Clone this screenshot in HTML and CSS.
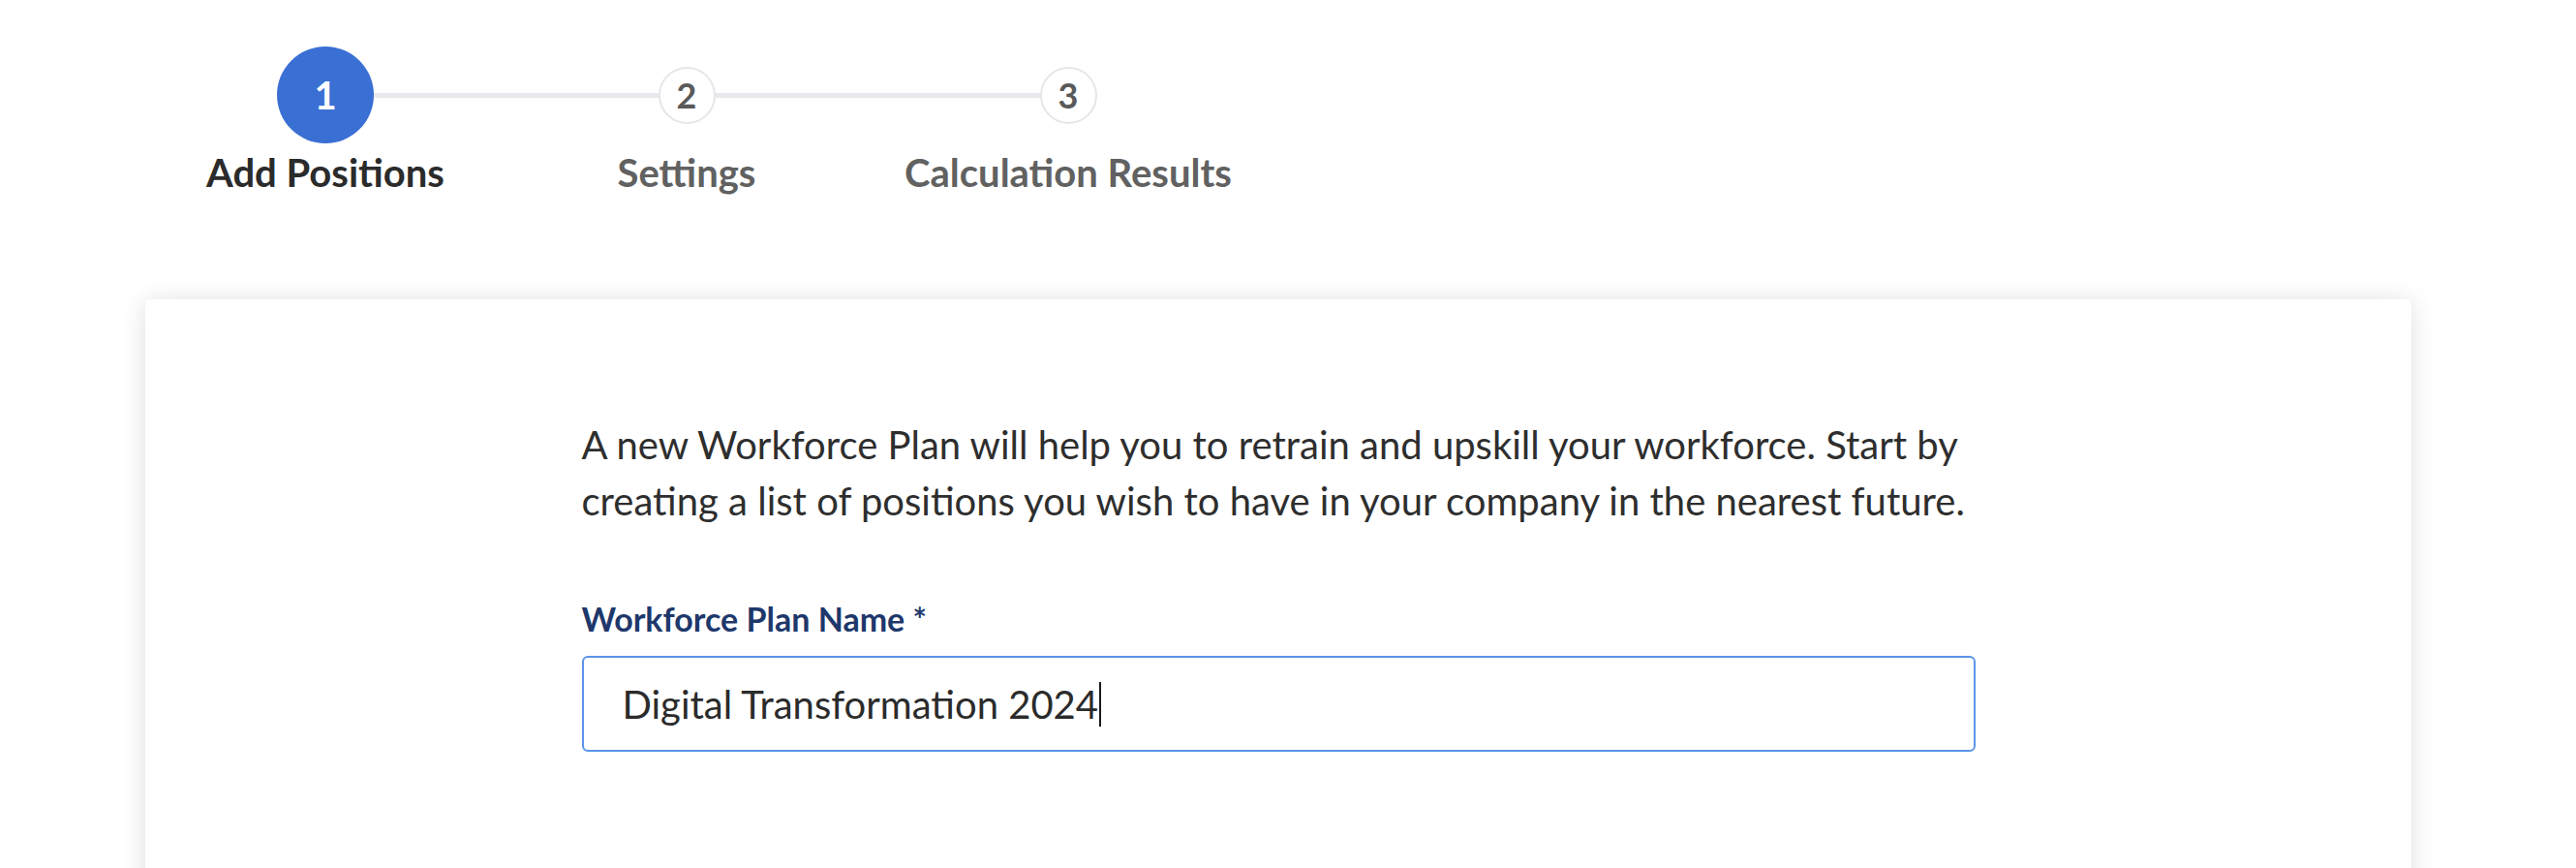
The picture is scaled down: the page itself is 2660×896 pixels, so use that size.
FILE: index.html
```html
<!DOCTYPE html>
<html lang="en">
<head>
<meta charset="utf-8">
<title>New Workforce Plan</title>
<link rel="stylesheet" href="styles.css">
</head>
<body>
<div class="page">
  <ol class="stepper">
    <li class="step step-1 is-active">
      <div class="step-dot"><span class="dot">1</span></div>
      <div class="step-label">Add Positions</div>
    </li>
    <li class="step step-2">
      <div class="step-dot"><span class="dot">2</span></div>
      <div class="step-label">Settings</div>
    </li>
    <li class="step step-3">
      <div class="step-dot"><span class="dot">3</span></div>
      <div class="step-label">Calculation Results</div>
    </li>
  </ol>

  <section class="card">
    <div class="card-body">
      <p class="intro">A new Workforce Plan will help you to retrain and upskill your workforce. Start by creating a list of positions you wish to have in your company in the nearest future.</p>
      <div class="field">
        <label class="field-label">Workforce Plan Name *</label>
        <div class="text-input is-focused"><span class="value">Digital Transformation 2024</span><span class="caret"></span></div>
      </div>
    </div>
  </section>
</div>
</body>
</html>
```
FILE: styles.css
```css
html, body {
  margin: 0;
  padding: 0;
  background: #ffffff;
  overflow: hidden;
}

body {
  font-family: Lato, "Open Sans", "Liberation Sans", sans-serif;
  color: #2d2d2d;
}

.page {
  width: 2660px;
  height: 896px;
}

/* ---------- Stepper ---------- */
.stepper {
  list-style: none;
  margin: 0;
  padding: 48px 0 0 136px;
  display: grid;
  grid-template-columns: 400px 346px 442px;
}

.step {
  position: relative;
  display: flex;
  flex-direction: column;
  align-items: center;
}

.step-2::before,
.step-3::before {
  content: "";
  position: absolute;
  top: 48px;
  height: 5px;
  right: 50%;
  background: #e8e8ed;
  z-index: 0;
}
.step-2::before { left: -173px; }
.step-3::before { left: -221px; }

.step-dot {
  height: 100px;
  display: flex;
  align-items: center;
  justify-content: center;
  position: relative;
  z-index: 1;
}

.dot {
  box-sizing: border-box;
  width: 59px;
  height: 59px;
  border-radius: 50%;
  border: 2px solid #e6e6ea;
  background: #ffffff;
  color: #5a5a5a;
  font-weight: 700;
  font-size: 36px;
  display: flex;
  align-items: center;
  justify-content: center;
  line-height: 1;
}

.is-active .dot {
  width: 100px;
  height: 100px;
  border: none;
  background: #3a6fd4;
  color: #ffffff;
  font-size: 40px;
}

.step-label {
  margin-top: 6px;
  font-size: 40px;
  line-height: 48px;
  font-weight: 700;
  color: #616161;
  white-space: nowrap;
}

.is-active .step-label {
  color: #2b2b2b;
}

/* ---------- Card ---------- */
.card {
  margin: 107px 0 0 150px;
  width: 2340px;
  min-height: 700px;
  background: #ffffff;
  border-radius: 6px;
  box-shadow: 0 2px 26px rgba(0, 0, 0, 0.13);
}

.card-body {
  width: 1439px;
  margin: 0 auto;
  padding-top: 121px;
}

.intro {
  margin: 0;
  font-size: 40px;
  line-height: 58px;
  color: #2e2e2e;
}

.field {
  margin-top: 72px;
  display: flex;
  flex-direction: column;
  gap: 18px;
}

.field-label {
  font-size: 34px;
  line-height: 41px;
  font-weight: 700;
  color: #1e386b;
}

.text-input {
  box-sizing: border-box;
  height: 99px;
  border: 2px solid #5b94ea;
  border-radius: 6px;
  padding: 0 40px;
  display: flex;
  align-items: center;
  font-size: 40px;
  color: #2b2b2b;
}

.caret {
  display: inline-block;
  width: 2px;
  height: 46px;
  margin-left: 1px;
  background: #1a1a1a;
}
```
